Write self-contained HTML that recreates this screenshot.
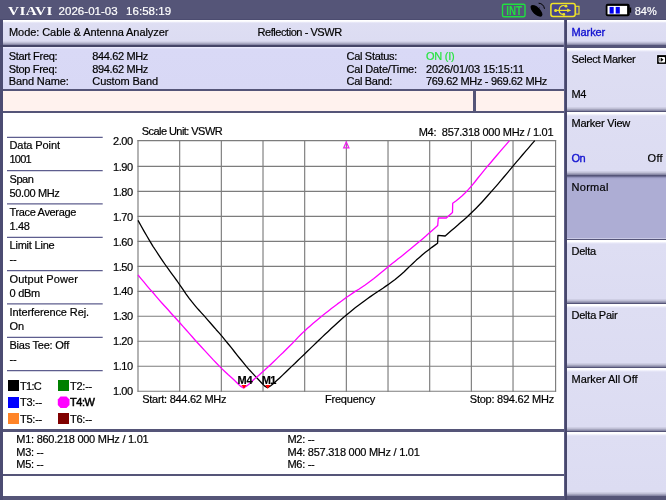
<!DOCTYPE html>
<html><head><meta charset="utf-8"><title>Cable &amp; Antenna Analyzer</title>
<style>
html,body{margin:0;padding:0;background:#555578}
body{width:666px;height:500px;background:#555578;position:relative;overflow:hidden;font-family:"Liberation Sans",sans-serif}
.t{position:absolute;white-space:pre;line-height:1;font-size:11px;-webkit-text-stroke:0.2px currentColor}
.abs{position:absolute}
.bar{position:absolute;background:linear-gradient(#fff 0,#fff 1.2px,#e6e6f7 2.6px,#dedef3 3.6px,#dcdcf2 calc(100% - 4px),#b8b8d0 calc(100% - 2px),#7c7c9c 100%)}
.key{position:absolute;left:567px;width:99px;background:linear-gradient(#fff 0,#fff 1.5px,#ececfa 2.8px,#dedef3 4px,#dcdcf2 calc(100% - 4.5px),#c0c0d6 calc(100% - 2.5px),#9090ac calc(100% - 0.8px),#7c7c9c 100%)}
.key.sel{background:linear-gradient(#55557a 0,#8c8cb4 1.2px,#a8a8d0 2.6px,#adadd4 4px,#adadd4 calc(100% - 1.5px),#d8d8ee 100%)}
.sep{position:absolute;left:7px;width:96px;height:1.4px;background:#5c5c8c}
.sq{position:absolute;width:11px;height:11px}
svg{position:absolute;left:0;top:0;will-change:transform}
</style></head><body>
<div class="abs" style="left:0;top:20px;width:3px;height:480px;background:#4c4c72"></div>
<div class="abs" style="left:563.6px;top:20px;width:1.2px;height:476px;background:#5e5e86"></div>
<div class="abs" style="left:564.8px;top:20px;width:2.2px;height:480px;background:#47476c"></div>
<!-- mode bar -->
<div class="bar" style="left:2.7px;top:20px;width:560.9px;height:25px"></div>
<div class="bar" style="left:567px;top:20px;width:99px;height:25px"></div>
<div class="abs" style="left:0;top:45px;width:563px;height:2px;background:#454568"></div>
<div class="abs" style="left:0;top:18.6px;width:666px;height:1.4px;background:#4c4c70"></div>
<!-- info panel -->
<div class="abs" style="left:2.7px;top:47px;width:560.9px;height:42px;background:linear-gradient(#f0f0ff 0,#d9d9f6 2px,#d8d8f5 100%)"></div>
<!-- message bar -->
<div class="abs" style="left:2.7px;top:91px;width:470.3px;height:20px;background:#fff2ee"></div>
<div class="abs" style="left:476px;top:91px;width:87.6px;height:20px;background:#fff2ee"></div>
<!-- main -->
<div class="abs" style="left:2.7px;top:113px;width:560.9px;height:315.8px;background:#fff"></div>
<!-- marker table -->
<div class="abs" style="left:2.7px;top:431.5px;width:560.9px;height:42.2px;background:#fff"></div>
<div class="abs" style="left:2.7px;top:476.1px;width:560.9px;height:19.8px;background:#fff"></div>
<div class="key" style="top:48.0px;height:62.6px"></div><div class="key" style="top:112.0px;height:62.6px"></div><div class="key sel" style="top:175.6px;height:63.6px"></div><div class="key" style="top:240.0px;height:62.6px"></div><div class="key" style="top:304.0px;height:62.6px"></div><div class="key" style="top:368.0px;height:62.6px"></div><div class="key" style="top:432.0px;height:63.9px"></div>

<!-- legend -->
<div class="sq" style="left:8px;top:380px;background:#000"></div>
<div class="sq" style="left:58px;top:380px;background:#008000"></div>
<div class="sq" style="left:8px;top:397px;background:#0000ff"></div>
<div class="sq" style="left:8px;top:413px;background:#ff8428"></div>
<div class="sq" style="left:58px;top:413px;background:#800000"></div>
<svg width="666" height="500" viewBox="0 0 666 500">
<g stroke="#5e5e8e" stroke-width="1.25"><line x1="7" x2="102.7" y1="137.30" y2="137.30"/><line x1="7" x2="102.7" y1="170.63" y2="170.63"/><line x1="7" x2="102.7" y1="203.96" y2="203.96"/><line x1="7" x2="102.7" y1="237.29" y2="237.29"/><line x1="7" x2="102.7" y1="270.62" y2="270.62"/><line x1="7" x2="102.7" y1="303.95" y2="303.95"/><line x1="7" x2="102.7" y1="337.28" y2="337.28"/><line x1="7" x2="102.7" y1="370.61" y2="370.61"/></g>
<g stroke="#7c7c7c" stroke-width="1.15"><line x1="138.00" y1="140.10" x2="138.00" y2="391.70"/><line x1="179.67" y1="140.10" x2="179.67" y2="391.70"/><line x1="221.34" y1="140.10" x2="221.34" y2="391.70"/><line x1="263.01" y1="140.10" x2="263.01" y2="391.70"/><line x1="304.68" y1="140.10" x2="304.68" y2="391.70"/><line x1="346.35" y1="140.10" x2="346.35" y2="391.70"/><line x1="388.02" y1="140.10" x2="388.02" y2="391.70"/><line x1="429.69" y1="140.10" x2="429.69" y2="391.70"/><line x1="471.36" y1="140.10" x2="471.36" y2="391.70"/><line x1="513.03" y1="140.10" x2="513.03" y2="391.70"/><line x1="555.60" y1="140.10" x2="555.60" y2="391.70"/><line x1="137.50" y1="140.60" x2="556.10" y2="140.60"/><line x1="137.50" y1="166.42" x2="556.10" y2="166.42"/><line x1="137.50" y1="191.40" x2="556.10" y2="191.40"/><line x1="137.50" y1="216.37" x2="556.10" y2="216.37"/><line x1="137.50" y1="241.35" x2="556.10" y2="241.35"/><line x1="137.50" y1="266.32" x2="556.10" y2="266.32"/><line x1="137.50" y1="291.30" x2="556.10" y2="291.30"/><line x1="137.50" y1="316.27" x2="556.10" y2="316.27"/><line x1="137.50" y1="341.25" x2="556.10" y2="341.25"/><line x1="137.50" y1="366.22" x2="556.10" y2="366.22"/><line x1="137.50" y1="391.20" x2="556.10" y2="391.20"/></g>
<polyline points="138.0,220.4 141.0,225.8 144.0,231.1 147.0,236.3 150.0,241.3 153.0,246.3 156.1,251.0 159.1,255.7 162.1,260.2 165.1,264.5 168.1,268.7 171.1,272.8 174.1,276.9 177.1,281.0 180.1,285.3 183.1,289.7 186.1,294.1 189.2,298.4 192.2,302.2 195.2,305.8 198.2,309.3 201.2,312.6 204.2,315.9 207.2,319.4 210.2,322.8 213.2,326.2 216.2,329.7 219.3,333.1 222.3,336.7 225.3,340.3 228.3,344.0 231.3,347.7 234.3,351.5 237.3,355.3 240.3,359.0 243.3,362.7 246.3,366.3 249.3,369.8 252.4,373.1 255.4,376.4 258.4,379.5 261.4,382.7 264.4,385.9 267.4,387.7 270.4,386.0 273.5,383.5 276.5,380.8 279.6,378.0 282.6,375.1 285.6,372.2 288.7,369.3 291.7,366.4 294.8,363.5 297.8,360.5 300.8,357.6 303.9,354.7 306.9,351.8 309.9,348.9 313.0,345.9 316.0,343.0 319.1,340.0 322.1,337.1 325.1,334.2 328.2,331.4 331.2,328.6 334.3,325.8 337.3,323.0 340.3,320.2 343.4,317.6 346.4,315.0 349.5,312.5 352.5,310.0 355.5,307.6 358.6,305.3 361.6,303.0 364.7,300.7 367.7,298.5 370.7,296.4 373.8,294.3 376.8,292.3 379.9,290.2 382.9,288.2 385.9,286.1 389.0,284.0 392.0,281.8 395.1,279.5 398.1,277.0 401.1,274.4 404.2,271.7 407.2,268.8 410.2,265.9 413.3,263.0 416.3,260.1 419.4,257.4 422.4,254.7 425.4,252.3 428.5,249.9 431.5,247.6 434.6,245.4 437.6,243.2 437.9,235.4 445.2,236.0 448.3,233.3 451.4,230.6 454.5,227.9 457.6,225.3 460.6,222.6 463.7,219.9 466.8,217.2 469.9,214.3 473.0,211.3 476.1,208.2 479.2,205.0 482.3,201.7 485.4,198.3 488.5,194.8 491.5,191.4 494.6,187.9 497.7,184.3 500.8,180.7 503.9,177.0 507.0,173.3 510.1,169.6 513.2,165.9 516.3,162.2 519.4,158.6 522.4,155.0 525.5,151.4 528.6,147.8 531.7,144.2 534.8,140.6" fill="none" stroke="#000" stroke-width="1.3" stroke-linejoin="round"/>
<polyline points="138.0,275.0 141.0,278.6 144.0,282.2 147.0,285.8 150.0,289.3 153.1,292.8 156.1,296.3 159.1,299.8 162.1,303.2 165.1,306.5 168.1,309.8 171.1,313.2 174.1,316.5 177.1,319.8 180.2,323.2 183.2,326.6 186.2,330.0 189.2,333.4 192.2,336.8 195.2,340.2 198.2,343.5 201.2,346.8 204.3,350.1 207.3,353.4 210.3,356.6 213.3,359.9 216.3,363.0 219.3,366.1 222.3,369.1 225.3,372.0 228.3,374.8 231.4,377.5 234.4,380.3 237.4,383.2 240.4,386.1 243.4,388.0 246.4,386.2 249.5,383.7 252.5,380.8 255.5,378.0 258.6,375.4 261.6,372.7 264.7,370.0 267.7,367.2 270.7,364.4 273.8,361.5 276.8,358.6 279.8,355.6 282.9,352.7 285.9,349.7 288.9,346.8 292.0,343.7 295.0,340.6 298.0,337.4 301.1,334.3 304.1,331.4 307.2,328.6 310.2,325.9 313.2,323.3 316.3,320.7 319.3,318.2 322.3,315.7 325.4,313.3 328.4,310.9 331.4,308.5 334.5,306.2 337.5,303.9 340.6,301.7 343.6,299.5 346.6,297.3 349.7,295.2 352.7,293.1 355.7,291.1 358.8,289.2 361.8,287.2 364.8,285.2 367.9,283.0 370.9,280.8 373.9,278.5 377.0,276.0 380.0,273.5 383.1,271.0 386.1,268.5 389.1,266.0 392.2,263.6 395.2,261.2 398.2,258.8 401.3,256.4 404.3,254.0 407.3,251.5 410.4,249.1 413.4,246.6 416.4,244.1 419.5,241.5 422.5,238.9 425.6,236.3 428.6,233.6 431.6,231.0 434.7,228.3 437.7,225.6 438.3,218.0 446.3,218.0 452.5,212.4 452.7,203.3 455.9,201.0 459.0,198.4 462.2,195.7 465.3,192.7 468.5,189.4 471.6,185.8 474.8,182.0 477.9,178.0 481.1,174.1 484.3,170.2 487.4,166.4 490.6,162.7 493.7,159.0 496.9,155.3 500.0,151.6 503.2,147.9 506.3,144.3 509.5,140.6" fill="none" stroke="#ff00ff" stroke-width="1.3" stroke-linejoin="round"/>
<!-- markers -->
<polygon points="241.4,385 246.6,385 244,388.8" fill="#ff0000"/>
<polygon points="265.2,385 270.4,385 267.8,388.8" fill="#ff0000"/>
<polygon points="346.3,142 343.7,147.8 348.9,147.8" fill="none" stroke="#f020f0" stroke-width="1.25"/>
<!-- T4 circle -->
<polygon points="60.5,396.5 66.5,396.5 69.5,399.5 69.5,405 66.5,408 60.5,408 57.8,405 57.8,399.5" fill="#ff00ff"/>
<text transform="translate(8,14.7) scale(1.27,1)" font-family="Liberation Serif, serif" font-size="12" font-weight="bold" fill="#fff" letter-spacing="0.3">VIAVI</text>
<!-- INT box -->
<text transform="translate(506.3,15) scale(0.98,1.2)" font-family="Liberation Sans, sans-serif" font-size="10" font-weight="bold" fill="#20e040">INT</text>
<rect x="502.5" y="4.3" width="22.5" height="12.4" rx="1.5" fill="none" stroke="#20e040" stroke-width="1.4"/>
<!-- satellite dish -->
<g transform="translate(536.5,10.8) rotate(44)">
<ellipse cx="0" cy="0" rx="7.5" ry="3.6" fill="#000"/>
<path d="M-7.3,0.5 Q0,6.5 7.3,0.5Z" fill="#000"/>
</g>
<path d="M537.2,10.2 L539.6,7.8" stroke="#000" stroke-width="0.9"/>
<path d="M538.6,3.2 Q543.6,3.6 544.5,8.8" fill="none" stroke="#000" stroke-width="1"/>
<!-- USB -->
<rect x="550.9" y="3.5" width="24.3" height="13" rx="2.2" fill="#44448e" stroke="#f0e428" stroke-width="1.5"/>
<rect x="575.6" y="6.3" width="3.4" height="7.8" fill="#505090" stroke="#f0e428" stroke-width="1.1"/>
<g stroke="#f0e428" stroke-width="1.2" fill="none">
<path d="M555.6,10.4 H568"/>
<path d="M565.6,6.3 A4,4 0 0 0 559.3,9 Q559,10.4 559.3,11.8 A4,4 0 0 0 563.5,14.4"/>
</g>
<circle cx="555.6" cy="10.4" r="1.5" fill="#f0e428"/>
<circle cx="566" cy="6.2" r="1.4" fill="#f0e428"/>
<circle cx="563.8" cy="14.4" r="1.4" fill="#f0e428"/>
<polygon points="567.2,8.5 571.2,10.4 567.2,12.3" fill="#f0e428"/>
<!-- battery -->
<rect x="605.7" y="3.8" width="24" height="12.4" rx="2" fill="#000"/>
<rect x="629.4" y="7.5" width="1.8" height="5.2" fill="#000"/>
<rect x="607.5" y="5.9" width="19.6" height="8.4" fill="#fff"/>
<rect x="609.6" y="6.9" width="4.1" height="6.7" fill="#0000f0"/>
<rect x="615.7" y="6.9" width="4.1" height="6.7" fill="#0000f0"/>
<!-- select marker icon -->
<rect x="656.6" y="54.6" width="10" height="9.8" fill="#ececfa"/>
<rect x="657.1" y="55.1" width="9" height="8.8" fill="#000"/>
<rect x="658.7" y="56.9" width="6.3" height="5.6" rx="0.8" fill="#fff"/>
<rect x="658.7" y="58" width="2" height="3.4" fill="#999"/>
<polygon points="660.9,57.6 663.6,59.7 660.9,61.8" fill="#000"/>
</svg>
<div id="tx" style="position:absolute;left:0;top:0;width:666px;height:500px;will-change:transform">
<span class="t" style="left:58.6px;top:6.0px;font-size:11.5px;letter-spacing:0.03px;color:#fff;">2026-01-03</span>
<span class="t" style="left:126.0px;top:6.0px;font-size:11.5px;letter-spacing:0.05px;color:#fff;">16:58:19</span>
<span class="t" style="left:634.7px;top:6.0px;font-size:11px;letter-spacing:0.02px;color:#fff;">84%</span>
<span class="t" style="left:9.0px;top:27.0px;font-size:11px;letter-spacing:-0.07px;color:#000;">Mode: Cable &amp; Antenna Analyzer</span>
<span class="t" style="left:257.5px;top:27.0px;font-size:11px;letter-spacing:-0.44px;color:#000;">Reflection - VSWR</span>
<span class="t" style="left:571.5px;top:27.0px;font-size:11px;letter-spacing:-0.09px;color:#1212d0;-webkit-text-stroke-width:0.35px;">Marker</span>
<span class="t" style="left:8.7px;top:51.0px;font-size:11px;letter-spacing:-0.31px;color:#000;">Start Freq:</span>
<span class="t" style="left:8.7px;top:64.0px;font-size:11px;letter-spacing:-0.31px;color:#000;">Stop Freq:</span>
<span class="t" style="left:8.7px;top:76.0px;font-size:11px;letter-spacing:-0.12px;color:#000;">Band Name:</span>
<span class="t" style="left:92.3px;top:51.0px;font-size:11px;letter-spacing:-0.36px;color:#000;">844.62 MHz</span>
<span class="t" style="left:92.3px;top:64.0px;font-size:11px;letter-spacing:-0.36px;color:#000;">894.62 MHz</span>
<span class="t" style="left:92.3px;top:76.0px;font-size:11px;letter-spacing:-0.09px;color:#000;">Custom Band</span>
<span class="t" style="left:346.5px;top:51.0px;font-size:11px;letter-spacing:-0.30px;color:#000;">Cal Status:</span>
<span class="t" style="left:346.5px;top:64.0px;font-size:11px;letter-spacing:-0.18px;color:#000;">Cal Date/Time:</span>
<span class="t" style="left:346.5px;top:76.0px;font-size:11px;letter-spacing:-0.31px;color:#000;">Cal Band:</span>
<span class="t" style="left:426.0px;top:51.0px;font-size:11px;letter-spacing:-0.24px;color:#28e440;">ON (I)</span>
<span class="t" style="left:426.0px;top:64.0px;font-size:11px;letter-spacing:-0.11px;color:#000;">2026/01/03 15:15:11</span>
<span class="t" style="left:426.0px;top:76.0px;font-size:11px;letter-spacing:-0.32px;color:#000;">769.62 MHz - 969.62 MHz</span>
<span class="t" style="left:9.5px;top:140.0px;font-size:11px;letter-spacing:-0.09px;color:#000;">Data Point</span>
<span class="t" style="left:9.5px;top:154.0px;font-size:11px;letter-spacing:-0.75px;color:#000;">1001</span>
<span class="t" style="left:9.5px;top:174.0px;font-size:11px;letter-spacing:-0.43px;color:#000;">Span</span>
<span class="t" style="left:9.5px;top:188.0px;font-size:11px;letter-spacing:-0.36px;color:#000;">50.00 MHz</span>
<span class="t" style="left:9.5px;top:207.0px;font-size:11px;letter-spacing:-0.34px;color:#000;">Trace Average</span>
<span class="t" style="left:9.5px;top:221.0px;font-size:11px;letter-spacing:-0.36px;color:#000;">1.48</span>
<span class="t" style="left:9.5px;top:240.0px;font-size:11px;letter-spacing:-0.21px;color:#000;">Limit Line</span>
<span class="t" style="left:9.5px;top:254.0px;font-size:11px;letter-spacing:-0.21px;color:#000;">--</span>
<span class="t" style="left:9.5px;top:274.0px;font-size:11px;letter-spacing:0.10px;color:#000;">Output Power</span>
<span class="t" style="left:9.5px;top:288.0px;font-size:11px;letter-spacing:-0.26px;color:#000;">0 dBm</span>
<span class="t" style="left:9.5px;top:307.0px;font-size:11px;letter-spacing:-0.11px;color:#000;">Interference Rej.</span>
<span class="t" style="left:9.5px;top:321.0px;font-size:11px;letter-spacing:-0.09px;color:#000;">On</span>
<span class="t" style="left:9.5px;top:340.0px;font-size:11px;letter-spacing:-0.24px;color:#000;">Bias Tee: Off</span>
<span class="t" style="left:9.5px;top:354.0px;font-size:11px;letter-spacing:-0.21px;color:#000;">--</span>
<span class="t" style="left:20.0px;top:381.0px;font-size:11px;letter-spacing:-0.71px;color:#000;">T1:C</span>
<span class="t" style="left:70.0px;top:381.0px;font-size:11px;letter-spacing:-0.25px;color:#000;">T2:--</span>
<span class="t" style="left:20.0px;top:397.0px;font-size:11px;letter-spacing:-0.25px;color:#000;">T3:--</span>
<span class="t" style="left:70.0px;top:397.0px;font-size:11px;letter-spacing:-0.45px;color:#000;-webkit-text-stroke-width:0.5px;">T4:W</span>
<span class="t" style="left:20.0px;top:414.0px;font-size:11px;letter-spacing:-0.25px;color:#000;">T5:--</span>
<span class="t" style="left:70.0px;top:414.0px;font-size:11px;letter-spacing:-0.25px;color:#000;">T6:--</span>
<span class="t" style="left:141.7px;top:126.0px;font-size:11px;letter-spacing:-0.55px;color:#000;">Scale Unit: VSWR</span>
<span class="t" style="left:418.7px;top:127.0px;font-size:11px;letter-spacing:-0.27px;color:#000;">M4:  857.318 000 MHz / 1.01</span>
<span class="t" style="left:113.0px;top:136.0px;font-size:11px;letter-spacing:-0.43px;color:#000;">2.00</span>
<span class="t" style="left:113.0px;top:162.0px;font-size:11px;letter-spacing:-0.43px;color:#000;">1.90</span>
<span class="t" style="left:113.0px;top:187.0px;font-size:11px;letter-spacing:-0.43px;color:#000;">1.80</span>
<span class="t" style="left:113.0px;top:212.0px;font-size:11px;letter-spacing:-0.43px;color:#000;">1.70</span>
<span class="t" style="left:113.0px;top:237.0px;font-size:11px;letter-spacing:-0.43px;color:#000;">1.60</span>
<span class="t" style="left:113.0px;top:262.0px;font-size:11px;letter-spacing:-0.43px;color:#000;">1.50</span>
<span class="t" style="left:113.0px;top:286.0px;font-size:11px;letter-spacing:-0.43px;color:#000;">1.40</span>
<span class="t" style="left:113.0px;top:311.0px;font-size:11px;letter-spacing:-0.43px;color:#000;">1.30</span>
<span class="t" style="left:113.0px;top:336.0px;font-size:11px;letter-spacing:-0.43px;color:#000;">1.20</span>
<span class="t" style="left:113.0px;top:361.0px;font-size:11px;letter-spacing:-0.43px;color:#000;">1.10</span>
<span class="t" style="left:113.0px;top:386.0px;font-size:11px;letter-spacing:-0.43px;color:#000;">1.00</span>
<span class="t" style="left:142.2px;top:394.0px;font-size:11px;letter-spacing:-0.27px;color:#000;">Start: 844.62 MHz</span>
<span class="t" style="left:324.9px;top:394.0px;font-size:11px;letter-spacing:-0.19px;color:#000;">Frequency</span>
<span class="t" style="left:469.8px;top:394.0px;font-size:11px;letter-spacing:-0.24px;color:#000;">Stop: 894.62 MHz</span>
<span class="t" style="left:237.5px;top:375.0px;font-size:11px;letter-spacing:-0.09px;color:#000;font-weight:bold;">M4</span>
<span class="t" style="left:261.8px;top:375.0px;font-size:11px;letter-spacing:-0.69px;color:#000;font-weight:bold;">M1</span>
<span class="t" style="left:16.3px;top:434.0px;font-size:11px;letter-spacing:-0.26px;color:#000;">M1: 860.218 000 MHz / 1.01</span>
<span class="t" style="left:16.3px;top:447.0px;font-size:11px;letter-spacing:-0.29px;color:#000;">M3: --</span>
<span class="t" style="left:16.3px;top:459.0px;font-size:11px;letter-spacing:-0.29px;color:#000;">M5: --</span>
<span class="t" style="left:287.5px;top:434.0px;font-size:11px;letter-spacing:-0.29px;color:#000;">M2: --</span>
<span class="t" style="left:287.5px;top:447.0px;font-size:11px;letter-spacing:-0.26px;color:#000;">M4: 857.318 000 MHz / 1.01</span>
<span class="t" style="left:287.5px;top:459.0px;font-size:11px;letter-spacing:-0.29px;color:#000;">M6: --</span>
<span class="t" style="left:571.5px;top:54.0px;font-size:11px;letter-spacing:-0.30px;color:#000;">Select Marker</span>
<span class="t" style="left:571.5px;top:89.0px;font-size:11px;letter-spacing:-0.39px;color:#000;">M4</span>
<span class="t" style="left:571.5px;top:118.0px;font-size:11px;letter-spacing:-0.22px;color:#000;">Marker View</span>
<span class="t" style="left:571.5px;top:153.0px;font-size:11px;letter-spacing:-0.59px;color:#1212d0;-webkit-text-stroke-width:0.35px;">On</span>
<span class="t" style="left:647.5px;top:153.0px;font-size:11px;letter-spacing:0.34px;color:#000;">Off</span>
<span class="t" style="left:571.5px;top:182.0px;font-size:11px;letter-spacing:0.29px;color:#000;">Normal</span>
<span class="t" style="left:571.5px;top:246.0px;font-size:11px;letter-spacing:-0.24px;color:#000;">Delta</span>
<span class="t" style="left:571.5px;top:310.0px;font-size:11px;letter-spacing:-0.23px;color:#000;">Delta Pair</span>
<span class="t" style="left:571.5px;top:374.0px;font-size:11px;letter-spacing:-0.03px;color:#000;">Marker All Off</span>
</div>
</body></html>
